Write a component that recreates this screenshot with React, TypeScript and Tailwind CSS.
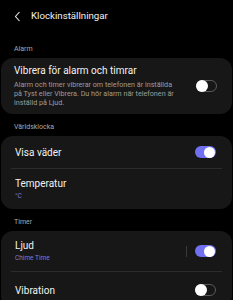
import React from 'react';

const Toggle: React.FC<{ on: boolean }> = ({ on }) =>
  on ? (
    <div className="w-[21px] h-[12px] rounded-full bg-[#7070f0] flex items-center justify-end pr-[1px]">
      <div className="w-[11px] h-[11px] rounded-full bg-white" />
    </div>
  ) : (
    <div className="w-[21px] h-[12px] rounded-full border border-[#5a5a5a] flex items-center relative">
      <div className="absolute left-[-1px] w-[12px] h-[12px] rounded-full bg-white" />
    </div>
  );

const Label: React.FC<{ text: string }> = ({ text }) => (
  <div className="px-[14px] text-[7px] text-[#a8a8a8] leading-none">{text}</div>
);

export default function App() {
  return (
    <div className="w-[233px] h-[300px] bg-black text-[#f2f2f2] overflow-hidden" style={{ fontFamily: 'Roboto, "Noto Sans", sans-serif' }}>
      <div className="h-[33px] flex items-center pl-[14px] gap-[10px]">
        <svg width="7" height="11" viewBox="0 0 7 11" fill="none">
          <path d="M5.5 1 L1.5 5.5 L5.5 10" stroke="#e8e8e8" strokeWidth="1.1" />
        </svg>
        <span className="text-[9.7px]">Klockinställningar</span>
      </div>

      <div className="pt-[13px]">
        <Label text="Alarm" />
      </div>

      <div className="mx-[1px] mt-[5px] h-[56px] rounded-[12px] bg-[#171717] flex items-center pl-[13px] pr-[15px]">
        <div className="flex-1">
          <div className="text-[10px] leading-none mb-[4px]">Vibrera för alarm och timrar</div>
          <div className="text-[7.2px] leading-[9px] text-[#9d9d9d] w-[164px]">
            Alarm och timer vibrerar om telefonen är inställda på Tyst eller Vibrera. Du hör alarm när telefonen är inställd på Ljud.
          </div>
        </div>
        <Toggle on={false} />
      </div>

      <div className="pt-[10px]">
        <Label text="Världsklocka" />
      </div>

      <div className="mx-[1px] mt-[5px] rounded-[12px] bg-[#171717]">
        <div className="h-[32px] flex items-center pl-[14px] pr-[16px]">
          <span className="flex-1 text-[10px]">Visa väder</span>
          <Toggle on={true} />
        </div>
        <div className="mx-[10px] h-px bg-[#2c2c2c]" />
        <div className="h-[40px] flex flex-col justify-center pl-[14px]">
          <span className="text-[10px] leading-none">Temperatur</span>
          <span className="text-[6.5px] leading-none mt-[4px] text-[#7b7bd8]">°C</span>
        </div>
      </div>

      <div className="pt-[10px]">
        <Label text="Timer" />
      </div>

      <div className="mx-[1px] mt-[5px] rounded-[12px] bg-[#171717]">
        <div className="h-[40px] flex items-center pl-[14px] pr-[16px]">
          <div className="flex-1 flex flex-col">
            <span className="text-[10px] leading-none">Ljud</span>
            <span className="text-[6.5px] leading-none mt-[4px] text-[#7b7bd8]">Chime Time</span>
          </div>
          <div className="w-px h-[11px] bg-[#3a3a3a] mr-[8px]" />
          <Toggle on={true} />
        </div>
        <div className="mx-[10px] h-px bg-[#2c2c2c]" />
        <div className="h-[36px] flex items-center pl-[14px] pr-[16px]">
          <span className="flex-1 text-[10px]">Vibration</span>
          <Toggle on={false} />
        </div>
      </div>
    </div>
  );
}
